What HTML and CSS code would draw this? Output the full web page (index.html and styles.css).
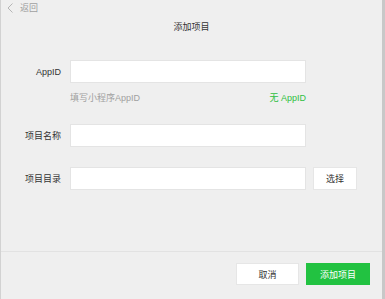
FILE: index.html
```html
<!DOCTYPE html>
<html lang="zh-CN">
<head>
    <meta charset="UTF-8">
    <meta name="viewport" content="width=device-width, initial-scale=1.0">
    <title>添加项目</title>
    <link rel="stylesheet" href="styles.css">
</head>
<body>
    <div class="window">
        <div class="topbar">
            <span class="back">
                <svg class="chevron" width="6" height="10" viewBox="0 0 6 10"><path d="M5.5 0.5 L1 5 L5.5 9.5" fill="none" stroke="#b5b5b5" stroke-width="1"/></svg>
                返回
            </span>
        </div>
        <div class="title">添加项目</div>

        <div class="form">
            <div class="row">
                <label class="label">AppID</label>
                <input class="field" type="text">
            </div>
            <div class="hint-row">
                <span class="hint">填写小程序AppID</span>
                <span class="no-appid">无 AppID</span>
            </div>
            <div class="row row-gap">
                <label class="label">项目名称</label>
                <input class="field" type="text">
            </div>
            <div class="row row-gap">
                <label class="label">项目目录</label>
                <input class="field" type="text">
                <button class="btn btn-pick">选择</button>
            </div>
        </div>

        <div class="footer">
            <button class="btn btn-cancel">取消</button>
            <button class="btn btn-primary">添加项目</button>
        </div>
    </div>
</body>
</html>
```

FILE: styles.css
```css
* { box-sizing: border-box; }
body { margin: 0; background-color: #efefef; font-family: "Liberation Sans", "Noto Sans CJK SC", sans-serif; font-size: 9px; color: #333; }

.window { display: flex; flex-direction: column; width: 385px; height: 299px; border-left: 1px solid #d2d2d2; border-right: 3px solid #c8c8c8; }

.topbar { height: 20px; line-height: 16px; padding-left: 6px; }
.back { display: inline-flex; align-items: center; gap: 7px; color: #a0a0a0; }
.chevron { display: block; }

.title { text-align: center; line-height: 14px; color: #333; }

.form { flex: 1; padding-top: 26px; }
.row { display: flex; align-items: center; height: 23px; }
.row-gap { margin-top: 20px; }
.label { width: 60px; text-align: right; margin-right: 9px; color: #333; }
.field { width: 236px; height: 23px; border: 1px solid #e4e4e4; background: #fff; outline: none; margin: 0; }

.hint-row { display: flex; justify-content: space-between; width: 236px; margin-left: 69px; margin-top: 9px; line-height: 12px; }
.hint { color: #a0a0a0; }
.no-appid { color: #2fbf3f; }

.btn { font-family: inherit; font-size: 9px; height: 23px; border: 1px solid #e6e6e6; background: #fff; color: #333; cursor: pointer; padding: 0; margin: 0; }
.btn-pick { width: 44px; margin-left: 7px; }

.footer { display: flex; justify-content: flex-end; gap: 7px; height: 48px; border-top: 1px solid #e2e2e2; padding-top: 11px; padding-right: 12px; }
.btn-cancel { width: 63px; height: 22px; }
.btn-primary { width: 64px; height: 22px; background: #22c241; border-color: #22c241; color: #fff; }
```
